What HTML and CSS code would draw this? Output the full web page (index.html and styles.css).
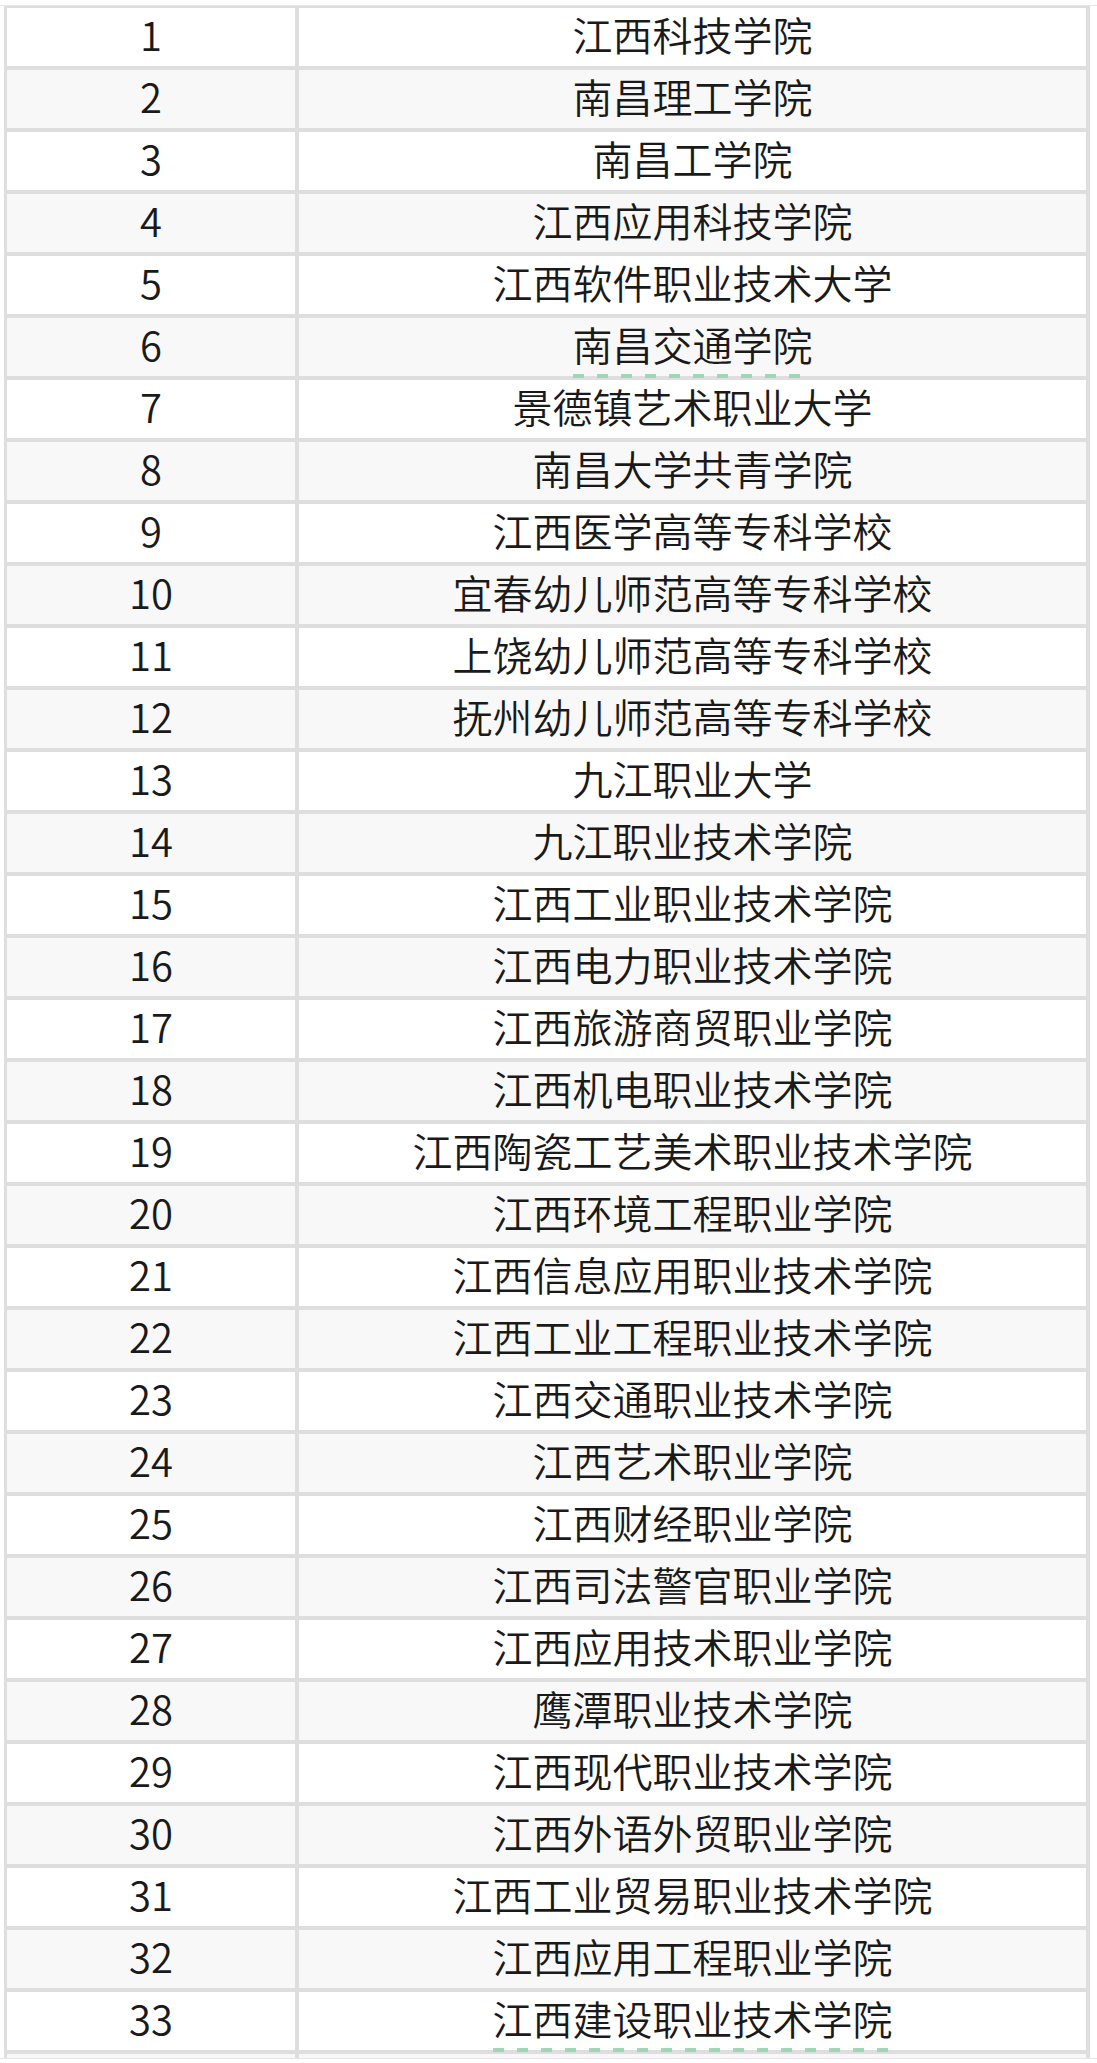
FILE: index.html
```html
<!DOCTYPE html>
<html lang="zh-CN">
<head>
<meta charset="utf-8">
<title>江西高校名单</title>
<link rel="stylesheet" href="styles.css">
</head>
<body>
<div class="frame">
<table class="list">
<tbody>
<tr><td class="num">1</td><td class="name">江西科技学院</td></tr>
<tr><td class="num">2</td><td class="name">南昌理工学院</td></tr>
<tr><td class="num">3</td><td class="name">南昌工学院</td></tr>
<tr><td class="num">4</td><td class="name">江西应用科技学院</td></tr>
<tr><td class="num">5</td><td class="name">江西软件职业技术大学</td></tr>
<tr><td class="num">6</td><td class="name"><span class="link">南昌交通学院</span></td></tr>
<tr><td class="num">7</td><td class="name">景德镇艺术职业大学</td></tr>
<tr><td class="num">8</td><td class="name">南昌大学共青学院</td></tr>
<tr><td class="num">9</td><td class="name">江西医学高等专科学校</td></tr>
<tr><td class="num">10</td><td class="name">宜春幼儿师范高等专科学校</td></tr>
<tr><td class="num">11</td><td class="name">上饶幼儿师范高等专科学校</td></tr>
<tr><td class="num">12</td><td class="name">抚州幼儿师范高等专科学校</td></tr>
<tr><td class="num">13</td><td class="name">九江职业大学</td></tr>
<tr><td class="num">14</td><td class="name">九江职业技术学院</td></tr>
<tr><td class="num">15</td><td class="name">江西工业职业技术学院</td></tr>
<tr><td class="num">16</td><td class="name">江西电力职业技术学院</td></tr>
<tr><td class="num">17</td><td class="name">江西旅游商贸职业学院</td></tr>
<tr><td class="num">18</td><td class="name">江西机电职业技术学院</td></tr>
<tr><td class="num">19</td><td class="name">江西陶瓷工艺美术职业技术学院</td></tr>
<tr><td class="num">20</td><td class="name">江西环境工程职业学院</td></tr>
<tr><td class="num">21</td><td class="name">江西信息应用职业技术学院</td></tr>
<tr><td class="num">22</td><td class="name">江西工业工程职业技术学院</td></tr>
<tr><td class="num">23</td><td class="name">江西交通职业技术学院</td></tr>
<tr><td class="num">24</td><td class="name">江西艺术职业学院</td></tr>
<tr><td class="num">25</td><td class="name">江西财经职业学院</td></tr>
<tr><td class="num">26</td><td class="name">江西司法警官职业学院</td></tr>
<tr><td class="num">27</td><td class="name">江西应用技术职业学院</td></tr>
<tr><td class="num">28</td><td class="name">鹰潭职业技术学院</td></tr>
<tr><td class="num">29</td><td class="name">江西现代职业技术学院</td></tr>
<tr><td class="num">30</td><td class="name">江西外语外贸职业学院</td></tr>
<tr><td class="num">31</td><td class="name">江西工业贸易职业技术学院</td></tr>
<tr><td class="num">32</td><td class="name">江西应用工程职业学院</td></tr>
<tr><td class="num">33</td><td class="name"><span class="link">江西建设职业技术学院</span></td></tr>
<tr class="cut"><td class="num"></td><td class="name"></td></tr>
</tbody>
</table>
</div>
</body>
</html>
```

FILE: styles.css
```css
html, body {
  margin: 0;
  padding: 0;
  background: #ffffff;
}

body {
  height: 2063px;
  overflow: hidden;
  font-family: "Noto Sans CJK SC", "Noto Sans", sans-serif;
  font-weight: 350;
  color: #1a1a1a;
}

.frame {
  margin-top: 5px;
  height: 2052px;
  border-top: 1px solid #e6e6e6;
  border-bottom: 1px solid #e6e6e6;
  overflow: hidden;
  padding-left: 4px;
}

.list {
  border-collapse: separate;
  border-spacing: 0;
  border-top: 2px solid #dedede;
  border-left: 3px solid #dedede;
  border-right: 4px solid #dedede;
  table-layout: fixed;
  width: 1086px;
}

.list td {
  height: 52px;
  padding: 0 0 6px;
  border-bottom: 4px solid #dedede;
  text-align: center;
  vertical-align: middle;
  font-size: 40px;
  font-weight: 350;
  line-height: 52px;
  white-space: nowrap;
}

.list tr:nth-child(even) td {
  background: #f8f8f8;
}

.list .num {
  width: 288px;
  border-right: 4px solid #dedede;
}

.list .name {
  width: auto;
}

.link {
  padding-bottom: 5px;
  background-image: linear-gradient(to right, #9fd7b6 0, #9fd7b6 11px, transparent 11px);
  background-size: 24px 4px;
  background-repeat: repeat-x;
  background-position: left bottom;
}
```
